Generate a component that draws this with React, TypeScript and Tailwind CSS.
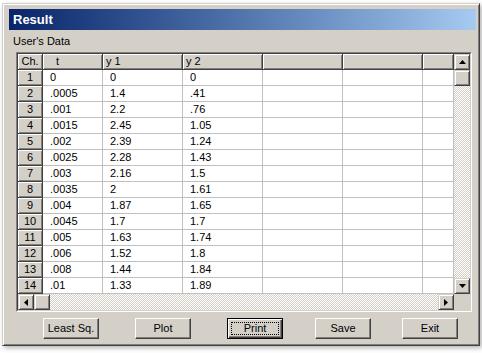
const font = "font-['Liberation_Sans',Arial,sans-serif]";

const rows = [
  ["0", "0", "0"],
  [".0005", "1.4", ".41"],
  [".001", "2.2", ".76"],
  [".0015", "2.45", "1.05"],
  [".002", "2.39", "1.24"],
  [".0025", "2.28", "1.43"],
  [".003", "2.16", "1.5"],
  [".0035", "2", "1.61"],
  [".004", "1.87", "1.65"],
  [".0045", "1.7", "1.7"],
  [".005", "1.63", "1.74"],
  [".006", "1.52", "1.8"],
  [".008", "1.44", "1.84"],
  [".01", "1.33", "1.89"],
];

const raised =
  "bg-[#d4d0c8] border-r border-b border-[#404040] shadow-[inset_1px_1px_0_#ffffff,inset_-1px_-1px_0_#808080]";
const cell = "bg-white border-r border-b border-[#c0c0c0] flex items-center";
const scrollBtn =
  "bg-[#d4d0c8] border border-t-[#d4d0c8] border-l-[#d4d0c8] border-r-[#404040] border-b-[#404040] shadow-[inset_1px_1px_0_#ffffff,inset_-1px_-1px_0_#808080] flex items-center justify-center";
const track =
  "bg-[image:repeating-conic-gradient(#d4d0c8_0%_25%,#ffffff_0%_50%)] bg-[length:2px_2px]";

function Arrow({ dir }: { dir: "up" | "down" | "left" | "right" }) {
  const pts = {
    up: "3.5,0 7,4 0,4",
    down: "0,0 7,0 3.5,4",
    left: "4,0 4,7 0,3.5",
    right: "0,0 4,3.5 0,7",
  }[dir];
  const horiz = dir === "up" || dir === "down";
  return (
    <svg width={horiz ? 7 : 4} height={horiz ? 4 : 7} viewBox={horiz ? "0 0 7 4" : "0 0 4 7"}>
      <polygon points={pts} fill="#000" />
    </svg>
  );
}

function Button({ label, ml, focused }: { label: string; ml: string; focused?: boolean }) {
  return (
    <div
      className={`${ml} relative w-[56px] h-[21px] bg-[#d4d0c8] flex items-center justify-center text-[11px] text-black ${
        focused
          ? "border border-black shadow-[inset_1px_1px_0_#ffffff,inset_-1px_-1px_0_#404040,inset_-2px_-2px_0_#808080]"
          : "border border-t-white border-l-white border-r-[#404040] border-b-[#404040] shadow-[inset_-1px_-1px_0_#808080]"
      }`}
    >
      {label}
      {focused && <span className="absolute inset-[3px] border border-dotted border-black" />}
    </div>
  );
}

export default function App() {
  return (
    <div className={`${font} w-[482px] h-[353px] bg-white pt-[3px] pl-[2px]`}>
      <div className="w-[478px] h-[343px] bg-[#d4d0c8] border border-t-[#d4d0c8] border-l-[#d4d0c8] border-r-[#404040] border-b-[#404040] shadow-[inset_1px_1px_0_#ffffff,inset_-1px_-1px_0_#808080,2px_2px_5px_rgba(0,0,0,0.3)] flex flex-col">
        <div className="ml-[6px] mt-[5px] w-[467px] h-[21px] bg-gradient-to-r from-[#0a246a] to-[#a6caf0] flex items-center pl-[4px]">
          <span className="text-white font-bold text-[13px]">Result</span>
        </div>

        <div className="ml-[10px] mt-[5px] h-[13px] leading-[13px] text-[11px] text-black">User's Data</div>

        <div className="ml-[13px] mt-[4px] w-[456px] h-[260px] border border-t-[#808080] border-l-[#808080] border-r-white border-b-white">
          <div className="w-full h-full border border-t-[#404040] border-l-[#404040] border-r-[#d4d0c8] border-b-[#d4d0c8] flex flex-col text-[11px] text-black">
            <div className="flex h-[240px]">
              <div className="w-[436px] overflow-hidden grid grid-cols-[25px_60px_80px_80px_80px_80px_31px] auto-rows-[16px]">
                <div className={`${raised} flex items-center justify-center`}>Ch.</div>
                <div className={`${raised} flex items-center pl-[13px]`}>t</div>
                <div className={`${raised} flex items-center pl-[3px]`}>y 1</div>
                <div className={`${raised} flex items-center pl-[3px]`}>y 2</div>
                <div className={raised} />
                <div className={raised} />
                <div className={raised} />
                {rows.map((r, i) => (
                  <div key={i} className="contents">
                    <div className={`${raised} flex items-center justify-center`}>{i + 1}</div>
                    <div className={`${cell} pl-[7px]`}>{r[0]}</div>
                    <div className={`${cell} pl-[7px]`}>{r[1]}</div>
                    <div className={`${cell} pl-[7px]`}>{r[2]}</div>
                    <div className={cell} />
                    <div className={cell} />
                    <div className={cell} />
                  </div>
                ))}
              </div>
              <div className={`w-[16px] flex flex-col ${track}`}>
                <div className={`${scrollBtn} h-[16px]`}>
                  <Arrow dir="up" />
                </div>
                <div className={`${scrollBtn} h-[16px]`} />
                <div className="flex-1" />
                <div className={`${scrollBtn} h-[16px]`}>
                  <Arrow dir="down" />
                </div>
              </div>
            </div>
            <div className="flex h-[16px]">
              <div className={`w-[436px] flex ${track}`}>
                <div className={`${scrollBtn} w-[16px]`}>
                  <Arrow dir="left" />
                </div>
                <div className={`${scrollBtn} w-[16px]`} />
                <div className="flex-1" />
                <div className={`${scrollBtn} w-[16px]`}>
                  <Arrow dir="right" />
                </div>
              </div>
              <div className="w-[16px] bg-[#d4d0c8]" />
            </div>
          </div>
        </div>

        <div className="flex mt-[6px]">
          <Button label="Least Sq." ml="ml-[40px]" />
          <Button label="Plot" ml="ml-[36px]" />
          <Button label="Print" ml="ml-[36px]" focused />
          <Button label="Save" ml="ml-[32px]" />
          <Button label="Exit" ml="ml-[31px]" />
        </div>
      </div>
    </div>
  );
}
